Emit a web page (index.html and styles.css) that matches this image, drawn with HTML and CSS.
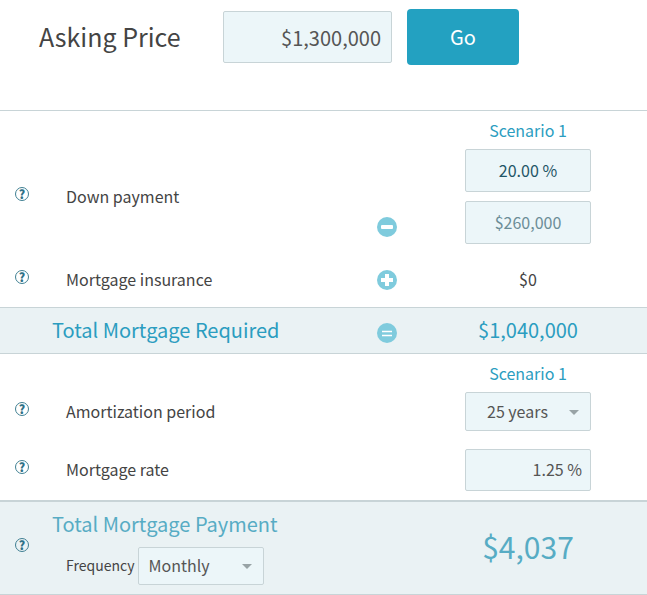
FILE: index.html
```html
<!DOCTYPE html>
<html lang="en">
<head>
  <meta charset="UTF-8" />
  <meta name="viewport" content="width=device-width, initial-scale=1" />
  <title>Mortgage Payment Calculator</title>
  <link rel="stylesheet" href="styles.css">
</head>
<body>
  <form class="calculator">
    <div class="price-bar">
      <label class="price-label" for="price">Asking Price</label>
      <input class="field price-input" id="price" type="text" value="$1,300,000">
      <button class="go" type="button">Go</button>
    </div>

    <div class="section">
      <div class="scenario">Scenario 1</div>
      <div class="row">
        <button class="help" type="button">?</button>
        <label class="label" id="down-label" for="down-percent">Down payment</label>
        <svg class="sign sign-low" viewBox="0 0 20 20">
          <circle cx="10" cy="10" r="10" fill="#7fcbdd"/>
          <rect x="4" y="8" width="12" height="4" rx="1" fill="#fff"/>
        </svg>
        <div class="value stack">
          <input class="field down-percent" id="down-percent" type="text" value="20.00 %">
          <input class="field down-amount" type="text" value="$260,000" aria-labelledby="down-label">
        </div>
      </div>
      <div class="row">
        <button class="help" type="button">?</button>
        <div class="label">Mortgage insurance</div>
        <svg class="sign" viewBox="0 0 20 20">
          <circle cx="10" cy="10" r="10" fill="#7fcbdd"/>
          <path d="M8 4h4v4h4v4h-4v4H8v-4H4V8h4z" fill="#fff"/>
        </svg>
        <div class="value value-text">$0</div>
      </div>
    </div>

    <div class="row total">
      <div class="label total-label">Total Mortgage Required</div>
      <svg class="sign" viewBox="0 0 20 20">
        <circle cx="10" cy="10" r="10" fill="#7fcbdd"/>
        <path d="M5 8.500h10M5 12.500h10" stroke="#fff" stroke-width="1.500"/>
      </svg>
      <div class="value value-text total-value">$1,040,000</div>
    </div>

    <div class="section">
      <div class="scenario">Scenario 1</div>
      <div class="row">
        <button class="help" type="button">?</button>
        <label class="label" for="period">Amortization period</label>
        <div class="value select">
          <select class="field period" id="period">
            <option>25 years</option>
          </select>
        </div>
      </div>
      <div class="row">
        <button class="help" type="button">?</button>
        <label class="label" for="rate">Mortgage rate</label>
        <div class="value">
          <input class="field rate" id="rate" type="text" value="1.25 %">
        </div>
      </div>
    </div>

    <div class="row payment">
      <button class="help" type="button">?</button>
      <div class="payment-info">
        <div class="total-label">Total Mortgage Payment</div>
        <div class="frequency">
          <label for="frequency">Frequency</label>
          <div class="select">
            <select class="field" id="frequency">
              <option>Monthly</option>
            </select>
          </div>
        </div>
      </div>
      <div class="value value-text payment-value">$4,037</div>
    </div>
  </form>
</body>
</html>
```
FILE: styles.css
```css
* {
  box-sizing: border-box;
}
body {
  margin: 0;
  background: #fff;
  color: #444;
  font-family: "Noto Sans CJK SC", "Open Sans", sans-serif;
  font-size: 16px;
  line-height: 24px;
}
input, select, button {
  font: inherit;
  color: inherit;
}

/* top bar */
.price-bar {
  display: flex;
  align-items: center;
  padding: 9px 39px 45px;
  border-bottom: 1px solid #c8d4d7;
}
.price-label {
  width: 184px;
  padding-bottom: 2px;
  font-size: 25px;
  line-height: 36px;
}
.price-input {
  width: 169px;
  height: 52px;
  margin-right: 15px;
  font-size: 20px;
  text-align: right;
}
.go {
  width: 112px;
  height: 56px;
  border: 0;
  border-radius: 4px;
  background: #23a1c1;
  color: #fff;
  font-size: 20px;
}

.field {
  display: block;
  border: 1px solid #c8d4d7;
  border-radius: 2px;
  background: #ecf6f9;
  color: #555;
  padding: 0 10px;
}

/* rows */
.section {
  display: flex;
  flex-direction: column;
  gap: 18px;
  padding: 7px 0 9px;
}
.scenario {
  align-self: flex-end;
  width: 126px;
  margin: 0 56px -11px 0;
  color: #2b9dc0;
  text-align: center;
}
.row {
  display: grid;
  grid-template-columns: 66px 1fr 88px 126px;
  align-items: center;
  min-height: 36px;
  padding-right: 56px;
}
.help {
  grid-column: 1;
  width: 14px;
  height: 14px;
  margin: 0 0 6px 15px;
  padding: 0;
  border: 1px solid #3f7f92;
  border-radius: 50%;
  background: none;
  color: #2f7187;
  font-size: 12px;
  font-weight: 900;
  line-height: 12px;
}
.label {
  grid-column: 2;
  padding-bottom: 2px;
}
.sign {
  grid-column: 3;
  width: 20px;
  height: 20px;
}
.sign-low {
  align-self: end;
  margin-bottom: 7px;
}
.value {
  grid-column: 4;
  text-align: center;
}
.value-text {
  padding-bottom: 2px;
}
.value .field {
  width: 100%;
}
.stack {
  display: flex;
  flex-direction: column;
  gap: 9px;
}
.stack .field {
  height: 43px;
  padding-bottom: 2px;
  text-align: center;
}
.stack .down-percent {
  color: #1f5566;
}
.stack .down-amount {
  color: #6b8d97;
}
.rate {
  height: 42px;
  padding-right: 8px;
  padding-bottom: 2px;
  text-align: right;
}

/* drop-downs */
.select {
  position: relative;
  width: 126px;
}
.select::after {
  content: "";
  position: absolute;
  right: 12px;
  top: 50%;
  margin-top: -2px;
  border: 5px solid transparent;
  border-top-color: #98a3a6;
  border-bottom: 0;
  pointer-events: none;
}
.select .field {
  appearance: none;
  width: 100%;
  height: 38px;
  padding-bottom: 2px;
}
.select .period {
  height: 39px;
  padding-left: 21px;
}

/* totals */
.total,
.payment {
  background: #eaf2f4;
  border-bottom: 1px solid #c8d4d7;
}
.total {
  min-height: 47px;
  border-top: 1px solid #c8d4d7;
}
.total-label {
  margin-left: -14px;
  color: #2b9dc0;
  font-size: 20px;
  line-height: 30px;
}
.total .sign {
  margin-top: 4px;
}
.total-value {
  color: #2b9dc0;
  font-size: 20px;
}
.payment {
  padding-top: 7px;
  padding-bottom: 9px;
  border-top: 2px solid #c8d4d7;
}
.payment .help {
  margin-bottom: 4px;
}
.payment .total-label,
.payment-value {
  color: #57acc4;
}
.payment-value {
  font-size: 30px;
  line-height: 40px;
}
.frequency {
  display: flex;
  align-items: center;
  gap: 4px;
  margin-top: 8px;
  font-size: 14px;
}
.frequency label {
  padding-bottom: 2px;
}
.frequency .field {
  padding-left: 9px;
  font-size: 16px;
}
```
